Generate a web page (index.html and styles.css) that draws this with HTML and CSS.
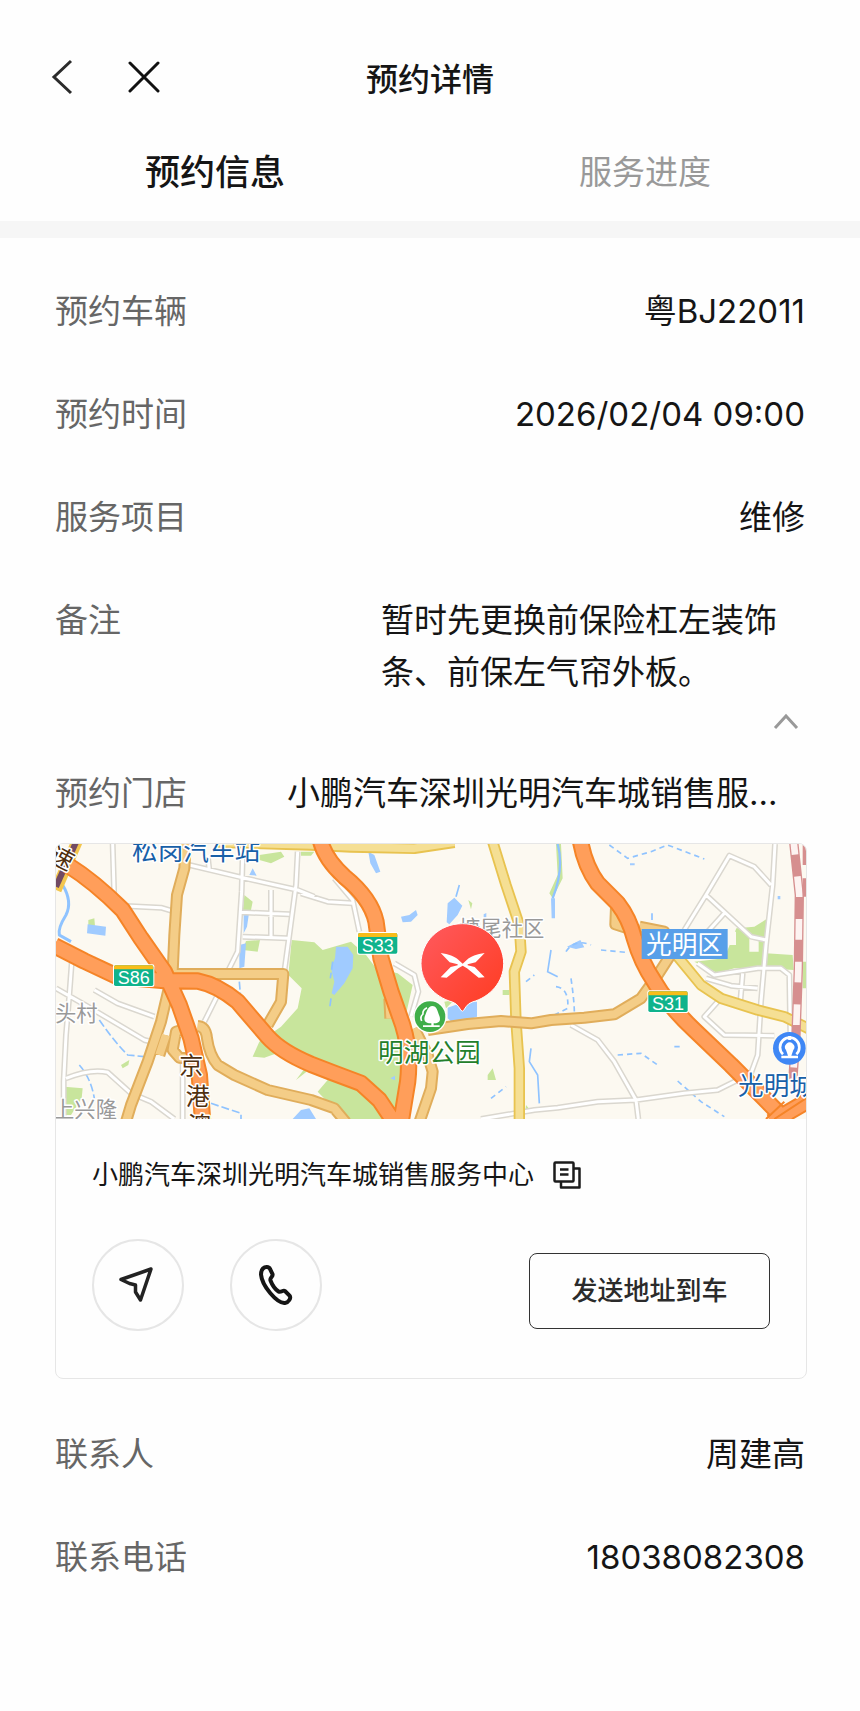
FILE: index.html
```html
<!DOCTYPE html>
<html lang="zh-CN">
<head>
    <meta charset="UTF-8">
    <meta name="viewport" content="width=device-width, initial-scale=1.0">
    <title>预约详情</title>
    <link rel="stylesheet" href="styles.css">
</head>
<body>

<!-- Title bar -->
<header class="navbar">
    <div class="nav-actions">
        <button type="button" class="icon-btn" aria-label="返回">
            <svg width="24" height="36" viewBox="0 0 24 36"><path d="M21 2L4 18L21 34" fill="none" stroke="#2b2b2b" stroke-width="3"/></svg>
        </button>
        <button type="button" class="icon-btn" aria-label="关闭">
            <svg width="32" height="36" viewBox="0 0 32 36"><path d="M2 4L30 32M30 4L2 32" fill="none" stroke="#111" stroke-width="3" stroke-linecap="round"/></svg>
        </button>
    </div>
    <h1 class="nav-title">预约详情</h1>
</header>

<!-- Tabs -->
<nav class="tabs">
    <button type="button" class="tab active">预约信息</button>
    <button type="button" class="tab">服务进度</button>
</nav>

<main class="content">

    <!-- Appointment -->
    <dl class="info">
        <div class="row"><dt>预约车辆</dt><dd>粤BJ22011</dd></div>
        <div class="row"><dt>预约时间</dt><dd>2026/02/04 09:00</dd></div>
        <div class="row"><dt>服务项目</dt><dd>维修</dd></div>
        <div class="row"><dt>备注</dt><dd class="remark">暂时先更换前保险杠左装饰条、前保左气帘外板。</dd></div>
    </dl>
    <button type="button" class="icon-btn collapse" aria-label="收起">
        <svg width="26" height="18" viewBox="0 0 26 18"><path d="M2 16L13 4L24 16" fill="none" stroke="#999" stroke-width="3"/></svg>
    </button>
    <dl class="info store">
        <div class="row"><dt>预约门店</dt><dd class="store-name">小鹏汽车深圳光明汽车城销售服务中心</dd></div>
    </dl>

    <!-- Store card -->
    <section class="card">
        <svg class="map" viewBox="15 27 2250 825" role="img" aria-label="门店地图">
            <defs>
                <linearGradient id="pin" x1="0" y1="0" x2="1" y2="1">
                    <stop offset="0" stop-color="#ff5a5f"/>
                    <stop offset="1" stop-color="#ff3b1f"/>
                </linearGradient>
                <!-- each road is drawn twice: casing, then fill -->
                <path id="streets" d="M185 27L190 195M225 213L330 218L370 230M415 90L575 128L740 165L790 185M470 60L475 105M575 60L572 170L560 350L525 420M740 50L735 150L715 300L700 410M572 232L715 238M575 305L710 310M660 165V305M62 385L55 480L45 600L38 740V852M15 460L120 520L280 615L340 630M130 465L200 505L310 545M500 480L460 560M45 730Q120 700 170 712L240 775L300 800L370 852M395 680V852M750 175L830 200L905 205M850 130L905 195L925 290M1030 385L1090 420L1102 470L1080 545M1290 852L1450 825L1520 818L1640 800L1755 795L1900 775L2000 765L2100 715L2120 660L2130 500L2145 330L2165 150L2172 27M1900 285L1965 180L2035 62L2110 95L2160 150M1965 180L2100 305L2145 315M1970 290L2020 235M1940 385L1990 420L2120 400H2190L2215 420L2218 600M1965 430L2040 452L2120 460M2075 415L2068 500M2000 500L1960 545L2020 600L2170 602M1560 570L1640 615L1690 680L1755 795L1762 852"/>
                <path id="yellow" d="M1325 20L1365 150L1405 270L1410 350L1390 410L1395 560L1405 700V860M500 22L780 30L900 36L1090 40L1210 22M1880 365L1950 450L2010 490L2120 525L2200 545L2275 582"/>
                <path id="provincial" d="M405 20L400 100L378 180L370 300L365 410L330 560L290 680L240 810L225 860M375 417H697L690 500L650 570M440 573Q465 575 468 610Q475 660 500 690L550 720L650 765L780 795L850 820L885 862M430 573L375 590L365 645L385 668L410 670M345 600L325 660M1130 585L1250 567L1350 558L1440 565L1500 555L1600 548L1690 538L1770 490L1820 420L1865 350L1840 290L1765 275M1695 215L1693 268L1730 280M1015 490L1018 550M1090 580L1130 660L1145 710L1140 760L1105 862"/>
                <path id="express" d="M10 332L100 378L200 425L340 437L440 438Q500 450 560 500L650 605Q690 650 780 688L850 715L930 745L985 795L1030 862M50 90Q130 140 215 225L270 310L340 410L385 510L420 610L445 720L455 862M808 15Q820 70 880 125Q960 190 975 260L990 370L1020 470L1055 570Q1080 650 1070 740L1050 862M1588 15Q1600 90 1640 145L1700 205Q1735 250 1750 310Q1770 380 1810 440Q1850 510 1930 585L2040 690L2110 760L2210 862M2160 862L2275 795"/>
            </defs>

            <rect x="15" y="27" width="2250" height="825" fill="#fcf9f1"/>

            <!-- green areas -->
            <g fill="#c8e59c">
                <path d="M722 315L790 322L815 345L900 320L945 360L975 400L1040 415L1085 450L1060 560L1080 700L1040 800L1010 852L880 852L800 770L830 735L750 700L690 650L640 668L605 665L625 620L690 575L740 520L752 460L712 420Z"/>
                <path d="M580 180L605 200L600 225L575 230ZM585 318L627 315L620 350L575 345ZM112 255L130 250L132 272L112 272ZM40 755L95 760L92 790L60 840L40 840ZM210 690L235 675L232 690L215 700ZM625 60L690 50L700 65L660 85L625 75Z"/>
                <path d="M2056 280L2110 275L2150 250L2145 355L2225 360L2228 405L2140 400L2050 400L2000 415L1930 380L2020 370ZM2255 380h12v80h-12ZM1530 27L1535 130L1505 190L1495 175L1520 120L1515 27ZM1355 465h20v15h-20ZM1310 720L1325 700L1335 735L1310 735ZM1252 195l12 10l-4 18ZM735 735L780 675V700ZM750 50h40l-10 12h-30ZM1425 810l18 22h-20ZM1180 500l30-5l-25 25Z"/>
            </g>
            <path d="M2035 290h20v40h-20ZM2095 305h28v45h-28Z" fill="#fcf9f1"/>

            <!-- water -->
            <g fill="#a0cbff">
                <path d="M855 335L890 335L907 360L905 400L880 445L850 480L842 475L850 440L840 400L852 370Z"/>
                <path d="M1190 205L1210 188L1234 212L1220 240L1195 268L1187 262ZM1190 518L1240 500L1278 500V545L1210 568L1190 550ZM952 50L970 60L988 110L975 115L958 85ZM1050 245L1075 240L1095 225L1100 240L1080 260L1055 262Z"/>
                <path d="M110 268L165 275L163 302L108 295ZM578 235h16l-6 40l-10 20ZM565 330l20-5l-5 70l-15 5ZM595 120l10-20l12 22ZM725 852L750 825L775 820L795 852Z"/>
                <path d="M1500 190h12v60h-10ZM1298 238l8-4v20h-8ZM1548 335l40-20l12 22l-25 5ZM1018 730l14-8v14ZM1737 85h14v6h-14ZM1800 235h6v20h-6ZM2180 183h8v10h-8Z"/>
            </g>
            <g fill="none" stroke="#8fc3ff" stroke-width="5">
                <path d="M35 150Q65 200 45 240Q20 280 25 300L60 320" stroke-width="9"/>
                <path d="M1520 27Q1540 100 1505 190" stroke-width="7"/>
                <path d="M145 555Q190 620 230 660L280 665M85 690Q120 730 130 790M480 805L540 825L570 835V852M565 440L570 500M845 380L838 430M840 490L836 520" stroke-dasharray="24 9"/>
                <path d="M1225 150L1215 185M1440 640L1435 680L1460 720L1465 805M1500 345L1490 410L1520 425"/>
                <path d="M1675 30L1730 70L1800 50L1850 30L1960 72M1545 350Q1570 310 1620 330M1650 345L1725 352M1515 455Q1555 460 1550 520L1510 540M1560 430Q1570 500 1570 530M1700 660L1770 655L1820 690M1880 738L1950 800L2020 845M1870 635h20M1320 790L1365 755M1425 440L1450 420" stroke-dasharray="16 12"/>
            </g>

            <!-- roads -->
            <g fill="none" stroke-linejoin="round">
                <use href="#streets" stroke="#dad7cf" stroke-width="18"/>
                <use href="#streets" stroke="#fff" stroke-width="9"/>
                <use href="#yellow" stroke="#e8c350" stroke-width="34"/>
                <use href="#yellow" stroke="#f5df94" stroke-width="23"/>
                <use href="#provincial" stroke="#e0ad5b" stroke-width="36"/>
                <use href="#provincial" stroke="#f4cd87" stroke-width="24"/>
            </g>

            <!-- railway -->
            <g fill="none">
                <path d="M2228 20L2245 180L2242 400L2235 600L2225 740" stroke="#d68f8f" stroke-width="28"/>
                <path d="M2228 20L2245 180L2242 400L2235 600L2225 740" stroke="#fdf3f1" stroke-width="20" stroke-dasharray="62 66" stroke-dashoffset="-105"/>
                <path d="M2262 30V185" stroke="#d68f8f" stroke-width="14" stroke-dasharray="60 40"/>
            </g>

            <!-- expressways -->
            <g fill="none" stroke-linejoin="round">
                <path d="M80 15L15 165" stroke="#f3c64d" stroke-width="34"/>
                <path d="M78 15L15 155" stroke="#724a63" stroke-width="18"/>
                <use href="#express" stroke="#f58427" stroke-width="52"/>
                <use href="#express" stroke="#ff9e5a" stroke-width="40"/>
                <path d="M2145 852L2200 800M2170 852L2265 790" stroke="#f58427" stroke-width="6"/>
            </g>

            <!-- road shields -->
            <g class="shield">
                <g transform="translate(186 388)"><rect width="124" height="68" rx="6" fill="#fff"/><rect x="3" y="3" width="118" height="62" rx="5" fill="#0fb38c"/><path d="M3 15V8Q3 3 8 3H116Q121 3 121 8V15Z" fill="#f7bd1a"/><text x="62" y="59">S86</text></g>
                <g transform="translate(918 291)"><rect width="124" height="68" rx="6" fill="#fff"/><rect x="3" y="3" width="118" height="62" rx="5" fill="#0fb38c"/><path d="M3 15V8Q3 3 8 3H116Q121 3 121 8V15Z" fill="#f7bd1a"/><text x="62" y="59">S33</text></g>
                <g transform="translate(1789 466)"><rect width="124" height="68" rx="6" fill="#fff"/><rect x="3" y="3" width="118" height="62" rx="5" fill="#0fb38c"/><path d="M3 15V8Q3 3 8 3H116Q121 3 121 8V15Z" fill="#f7bd1a"/><text x="62" y="59">S31</text></g>
            </g>

            <!-- place names -->
            <g class="place">
                <text x="243" y="74" class="blue">松岗汽车站</text>
                <text x="12" y="557" class="gray">头村</text>
                <text x="6" y="845" class="gray">上兴隆</text>
                <text x="1224" y="302" class="gray">塘尾社区</text>
                <text x="385" y="718" class="road">京</text>
                <text x="404" y="810" class="road">港</text>
                <text x="410" y="898" class="road">澳</text>
                <text x="-32" y="32" class="road" transform="translate(32 62) rotate(28)">速</text>
                <text x="981" y="682" class="green">明湖公园</text>
                <text x="2061" y="780" class="blue">光明城</text>
                <rect x="1772" y="282" width="258" height="90" fill="#589fe9"/>
                <text x="1785" y="358" class="district">光明区</text>
            </g>

            <!-- park -->
            <circle cx="1137" cy="545" r="50" fill="#fff"/>
            <circle cx="1137" cy="545" r="46" fill="#3fae49"/>
            <path d="M1144 513C1131 513 1127 530 1123 540C1116 556 1122 566 1141 565V571H1116V576H1166V571H1148V565C1168 566 1170 554 1164 540C1160 528 1157 513 1144 513Z" fill="#fff"/>
            <path d="M1128 518Q1114 525 1116 537Q1106 546 1112 558" fill="none" stroke="#fff" stroke-width="5"/>

            <!-- station -->
            <circle cx="2215" cy="640" r="49" fill="#3f87f5"/>
            <path d="M2196 658A29 29 0 1 1 2236 658" fill="none" stroke="#fff" stroke-width="8"/>
            <path d="M2205 645A14 14 0 1 1 2227 645L2221 662H2241V670H2191V662H2211Z" fill="#fff"/>
            <path d="M2216 603V615" stroke="#fff" stroke-width="9"/>

            <!-- store marker -->
            <path d="M1234 266C1304 266 1358 320 1358 386C1358 440 1318 486 1264 501Q1252 505 1246 514L1238 526Q1234 531 1230 526L1222 514Q1216 505 1204 501C1150 486 1110 440 1110 386C1110 320 1164 266 1234 266Z" fill="url(#pin)" stroke="#fff" stroke-width="3"/>
            <path d="M1169 354C1192 357 1212 365 1222 374L1235 386L1248 374C1258 365 1278 357 1301 354L1274 382L1250 388L1250 391L1271 396L1301 427L1283 428L1248 400L1235 392L1222 400L1187 428L1169 427L1199 396L1220 391L1220 388L1196 382Z" fill="#fff"/>
        </svg>

        <div class="card-body">
            <div class="address">
                <span>小鹏汽车深圳光明汽车城销售服务中心</span>
                <button type="button" class="icon-btn" aria-label="复制">
                    <svg width="30" height="30" viewBox="0 0 30 30"><g fill="none" stroke="#1c1c1c" stroke-width="2.5" stroke-linejoin="round"><rect x="2.5" y="2.5" width="19" height="19" rx="1"/><path d="M22 8.500H27.500V27.500H9V22M8 9.500H16.500M8 14.500H16.500"/></g></svg>
                </button>
            </div>
            <div class="actions">
                <button type="button" class="round-btn" aria-label="导航">
                    <svg width="40" height="40" viewBox="0 0 40 40"><path d="M3 14.500L33 4L22.500 35L17.500 27V20L11.500 18.500Z" fill="none" stroke="#222" stroke-width="3.5" stroke-linejoin="round"/></svg>
                </button>
                <button type="button" class="round-btn" aria-label="电话">
                    <svg width="40" height="40" viewBox="0 0 40 40"><path d="M7 3.500C9 1.500 13 1.500 14 4L16.500 9C17.500 11.500 13.500 12.500 14.500 15.500C16 19.500 19.500 24.500 22.500 26.500C25 28 27 24.500 29 26L33.500 30.500C35.500 33 32.500 37.500 29 38C21 38.500 6 21 5 9.500C5 7 5.500 5 7 3.500Z" fill="none" stroke="#151515" stroke-width="4"/></svg>
                </button>
                <button type="button" class="send-btn">发送地址到车</button>
            </div>
        </div>
    </section>

    <!-- Contact -->
    <dl class="info">
        <div class="row"><dt>联系人</dt><dd>周建高</dd></div>
        <div class="row"><dt>联系电话</dt><dd>18038082308</dd></div>
    </dl>

</main>

</body>
</html>
```
FILE: styles.css
```css
* {
    box-sizing: border-box;
}

body {
    margin: 0;
    background-color: #fefefe;
    color: #151515;
    font-family: Inter, "Noto Sans CJK SC", sans-serif;
    font-size: 33px;
    line-height: 52px;
}

button {
    padding: 0;
    border: none;
    background: none;
    color: inherit;
    font: inherit;
    cursor: pointer;
}

svg {
    display: block;
}

/* Title bar */
.navbar {
    display: grid;
    grid-template-columns: 1fr auto 1fr;
    align-items: center;
    padding: 54px 50px 0;
}

.nav-actions {
    display: flex;
    gap: 54px;
    padding-bottom: 6px;
}

.nav-title {
    margin: 0;
    font-size: 32px;
    font-weight: 500;
}

/* Tabs */
.tabs {
    display: flex;
    padding: 40px 0 23px;
    border-bottom: 17px solid #f6f6f6;
}

.tab {
    flex: 1;
    color: #999;
}

.tab.active {
    color: #151515;
    font-size: 35px;
    font-weight: 500;
}

/* Rows */
.content {
    padding: 47px 53px 80px 55px;
}

.info {
    display: flex;
    flex-direction: column;
    gap: 51px;
    margin: 0;
}

.row {
    display: flex;
    justify-content: space-between;
    padding-right: 2px;
}

dt {
    flex: none;
    color: #666;
}

dd {
    margin: 0;
}

.remark {
    width: 424px;
}

.collapse {
    display: block;
    margin: 14px 8px 0 auto;
}

.store {
    padding: 37px 18px 24px 0;
}

.store-name {
    width: 500px;
    overflow: hidden;
    text-overflow: ellipsis;
    white-space: nowrap;
}

/* Store card */
.card {
    margin-bottom: 49px;
    overflow: hidden;
    border: 1px solid #e6e6e6;
    border-radius: 8px;
}

.map {
    width: 100%;
    height: auto;
}

.shield text {
    fill: #fff;
    font-family: "Liberation Sans", sans-serif;
    font-size: 54px;
    text-anchor: middle;
}

.place text {
    font-size: 64px;
    paint-order: stroke;
    stroke: #fff;
    stroke-width: 9px;
    stroke-linejoin: round;
}

.place .blue {
    fill: #1860a8;
    font-size: 77px;
}

.place .green {
    fill: #23802b;
    font-size: 77px;
}

.place .gray {
    fill: #999;
}

.place .road {
    fill: #50300f;
    font-size: 72px;
}

.place .district {
    fill: #fff;
    stroke: none;
    font-size: 77px;
}

.card-body {
    padding: 30px 36px 47px;
    font-size: 26px;
}

.address {
    display: flex;
    align-items: center;
    gap: 18px;
}

.actions {
    display: flex;
    align-items: center;
    gap: 46px;
    margin-top: 38px;
}

.round-btn {
    display: grid;
    place-items: center;
    width: 92px;
    height: 92px;
    border: 2px solid #e6e6e6;
    border-radius: 50%;
}

.send-btn {
    width: 241px;
    height: 76px;
    margin: 12px 0 0 auto;
    border: 1px solid #333;
    border-radius: 8px;
    color: #2b2b2b;
    font-weight: 500;
}
```
